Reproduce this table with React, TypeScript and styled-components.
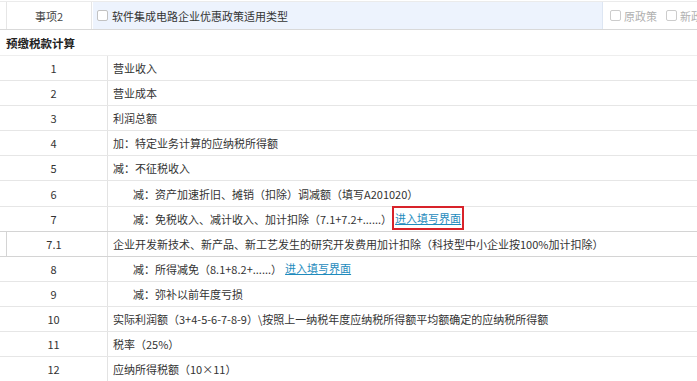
import styled, { createGlobalStyle } from "styled-components";

const GlobalStyle = createGlobalStyle`
  body {
    margin: 0;
    background: #ffffff;
    font-family: "Noto Sans CJK SC", "Noto Sans", sans-serif;
    overflow: hidden;
  }
`;

interface Row {
  no: string;
  text: string;
  indent?: boolean;
  link?: boolean;
  boxed?: boolean;
  sub?: boolean;
}

const rows: Row[] = [
  { no: "1", text: "营业收入" },
  { no: "2", text: "营业成本" },
  { no: "3", text: "利润总额" },
  { no: "4", text: "加：特定业务计算的应纳税所得额" },
  { no: "5", text: "减：不征税收入" },
  { no: "6", text: "减：资产加速折旧、摊销（扣除）调减额（填写A201020）", indent: true },
  { no: "7", text: "减：免税收入、减计收入、加计扣除（7.1+7.2+......）", indent: true, link: true, boxed: true },
  { no: "7.1", text: "企业开发新技术、新产品、新工艺发生的研究开发费用加计扣除（科技型中小企业按100%加计扣除）", sub: true },
  { no: "8", text: "减：所得减免（8.1+8.2+......）", indent: true, link: true },
  { no: "9", text: "减：弥补以前年度亏损", indent: true },
  { no: "10", text: "实际利润额（3+4-5-6-7-8-9）\\按照上一纳税年度应纳税所得额平均额确定的应纳税所得额" },
  { no: "11", text: "税率（25%）" },
  { no: "12", text: "应纳所得税额（10×11）" },
];

export default function App() {
  return (
    <Page>
      <GlobalStyle />
      <TopRow>
        <LabelCell>事项2</LabelCell>
        <BlueCell>
          <Check />
          <span>软件集成电路企业优惠政策适用类型</span>
        </BlueCell>
        <OptionCell>
          <Option>
            <Check $muted />
            原政策
          </Option>
          <Option>
            <Check $muted />
            新政策
          </Option>
        </OptionCell>
      </TopRow>
      <SectionTitle>预缴税款计算</SectionTitle>
      <Table>
        {rows.map((r) => (
          <TableRow key={r.no} $sub={r.sub}>
            <NoCell $sub={r.sub}>{r.no}</NoCell>
            <TextCell $indent={r.indent}>
              <span>{r.text}</span>
              {r.link && (
                <LinkBox $boxed={r.boxed}>
                  <Link>进入填写界面</Link>
                </LinkBox>
              )}
            </TextCell>
          </TableRow>
        ))}
      </Table>
    </Page>
  );
}

const Page = styled.div`
  width: 697px;
  height: 381px;
  overflow: hidden;
  font-size: 11px;
  color: #333333;
`;

const TopRow = styled.div`
  display: flex;
  height: 27px;
  margin-top: 1px;
  border-top: 1px solid #ebebeb;
  border-bottom: 1px solid #d9d9d9;
`;

const LabelCell = styled.div`
  width: 84px;
  margin-left: 6px;
  border-left: 1px solid #e6e6e6;
  border-right: 1px solid #e6e6e6;
  display: flex;
  align-items: center;
  justify-content: center;
  color: #444444;
`;

const BlueCell = styled.div`
  flex: 1;
  margin-left: 1px;
  background: #edf3fd;
  display: flex;
  align-items: center;
  gap: 4px;
  padding-left: 4px;
  color: #333333;
`;

const OptionCell = styled.div`
  width: 87px;
  border-left: 1px solid #dde6f3;
  display: flex;
  align-items: center;
  gap: 9px;
  padding-left: 7px;
  white-space: nowrap;
  overflow: hidden;
`;

const Option = styled.span`
  display: flex;
  align-items: center;
  gap: 3px;
  color: #b0b0b0;
`;

const Check = styled.span<{ $muted?: boolean }>`
  display: inline-block;
  width: 9px;
  height: 9px;
  border: 1px solid ${({ $muted }) => ($muted ? "#cccccc" : "#c2c2c2")};
  border-radius: 2px;
  background: #ffffff;
  flex-shrink: 0;
`;

const SectionTitle = styled.div`
  height: 25px;
  display: flex;
  align-items: center;
  padding-left: 6px;
  font-weight: bold;
  font-size: 11.5px;
  color: #222222;
`;

const Table = styled.div`
  display: flex;
  flex-direction: column;
  border-top: 1px solid #eeeeee;
`;

const TableRow = styled.div<{ $sub?: boolean }>`
  display: flex;
  height: 25.1px;
  box-sizing: border-box;
  border-bottom: 1px solid ${({ $sub }) => ($sub ? "#d4d4d4" : "#e6e6e6")};
  ${({ $sub }) => ($sub ? "margin-top: -1px; border-top: 1px solid #d4d4d4; height: 26.1px;" : "")}
`;

const NoCell = styled.div<{ $sub?: boolean }>`
  width: 108px;
  box-sizing: border-box;
  border-right: 1px solid #e3e3e3;
  ${({ $sub }) => ($sub ? "margin-left: 6px; width: 102px; border-left: 1px solid #d4d4d4; padding-right: 6px;" : "")}
  display: flex;
  align-items: center;
  justify-content: center;
`;

const TextCell = styled.div<{ $indent?: boolean }>`
  flex: 1;
  display: flex;
  align-items: center;
  padding-left: ${({ $indent }) => ($indent ? "25px" : "5px")};
  white-space: nowrap;
  overflow: visible;
`;

const LinkBox = styled.span<{ $boxed?: boolean }>`
  display: inline-flex;
  align-items: center;
  margin-left: 0;
  padding: 2px 1px;
  border: 2px solid ${({ $boxed }) => ($boxed ? "#d8232a" : "transparent")};
  margin-top: -1px;
`;

const Link = styled.span`
  color: #1f8bbd;
  text-decoration: underline;
  cursor: pointer;
`;
